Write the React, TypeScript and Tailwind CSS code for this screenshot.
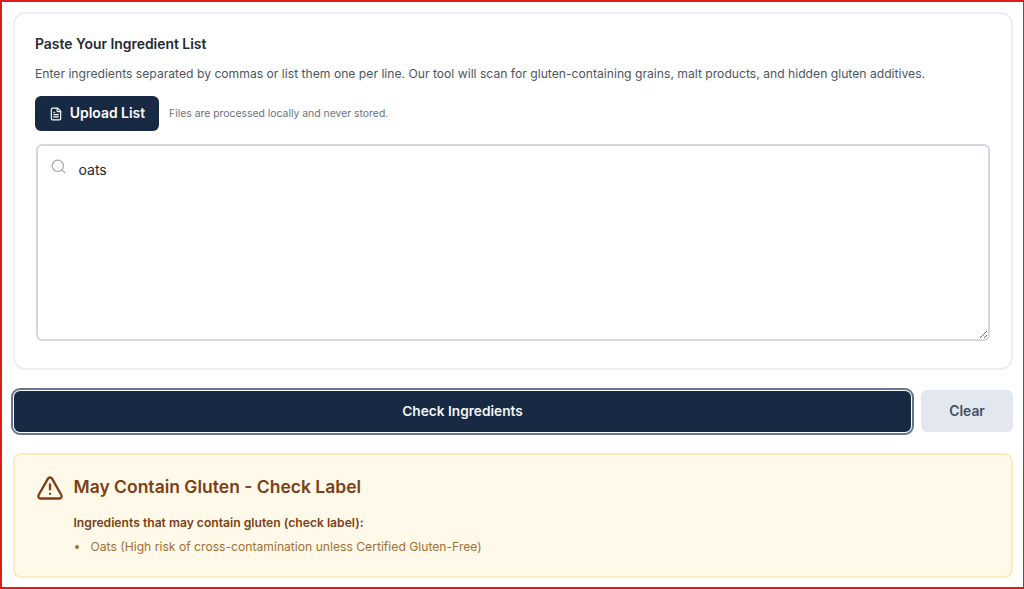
import { FileText, Search, TriangleAlert } from "lucide-react";

const font = { fontFamily: "Inter, sans-serif" };

export default function App() {
  return (
    <div
      style={font}
      className="box-border h-[589px] w-[1024px] overflow-hidden border-y-2 border-l-2 border-r border-[#e01b1b] bg-white pl-[10.5px] pr-[10px] pt-[10px]"
    >
      <section className="box-border h-[358px] rounded-[12px] border-2 border-[#eceef2] pl-[20.5px] pr-[21px] pt-[20px]">
        <h2 className="text-[13.9px] font-semibold leading-[20px] text-[#1f2937]">Paste Your Ingredient List</h2>
        <p className="mt-[11px] text-[12.17px] leading-[18px] text-[#4b5563]">
          Enter ingredients separated by commas or list them one per line. Our tool will scan for gluten-containing grains, malt products, and hidden gluten additives.
        </p>
        <div className="mt-[13px] flex items-center gap-[10px]">
          <button className="flex h-[35px] w-[124px] items-center justify-center gap-[7px] rounded-[6px] bg-[#182943] text-[13.9px] font-semibold text-white">
            <FileText size={14} strokeWidth={2} />
            Upload List
          </button>
          <span className="text-[10.4px] text-[#6b7280]">Files are processed locally and never stored.</span>
        </div>
        <div className="relative ml-[0.5px] mt-[13px]">
          <Search size={17} strokeWidth={1.6} className="absolute left-[14px] top-[14px] text-[#9ca3af]" />
          <textarea
            readOnly
            defaultValue="oats"
            className="box-border block h-[197px] w-full rounded-[6px] border-2 border-[#d3d7e2] bg-white pl-[41px] pt-[14px] text-[14px] leading-[20px] text-[#1f2937] outline-none"
          />
        </div>
      </section>
      <div className="mt-[20px] flex items-center gap-[10px]">
        <button className="ml-[1.5px] h-[41px] w-[897.5px] rounded-[6px] bg-[#182943] text-[13.7px] font-semibold text-[#f3f4f6] ring-[1.5px] ring-white outline-2 outline-offset-[1.5px] outline-[#64768f]">
          Check Ingredients
        </button>
        <button className="h-[42px] w-[92px] rounded-[6px] bg-[#e2e7f0] text-[13.9px] font-semibold text-[#475063]">
          Clear
        </button>
      </div>
      <section className="mt-[21px] box-border flex h-[125px] gap-[10px] rounded-[8px] border-2 border-[#f9eebd] bg-[#fef9e8] pl-[21px] pt-[18px]">
        <TriangleAlert size={28} strokeWidth={2} className="mt-[1px] shrink-0 text-[#7c3f17]" />
        <div>
          <h3 className="text-[17.5px] font-semibold leading-[28px] text-[#7c3f17]">May Contain Gluten - Check Label</h3>
          <p className="mt-[13px] text-[12.15px] font-semibold leading-[18px] text-[#7c3f17]">
            Ingredients that may contain gluten (check label):
          </p>
          <ul className="mt-[6px] text-[12.15px] leading-[18px] text-[#a36f35]">
            <li className="flex items-center gap-[12px]">
              <span className="ml-px h-[4px] w-[4px] shrink-0 rounded-full bg-[#a36f35]" />
              Oats (High risk of cross-contamination unless Certified Gluten-Free)
            </li>
          </ul>
        </div>
      </section>
    </div>
  );
}
